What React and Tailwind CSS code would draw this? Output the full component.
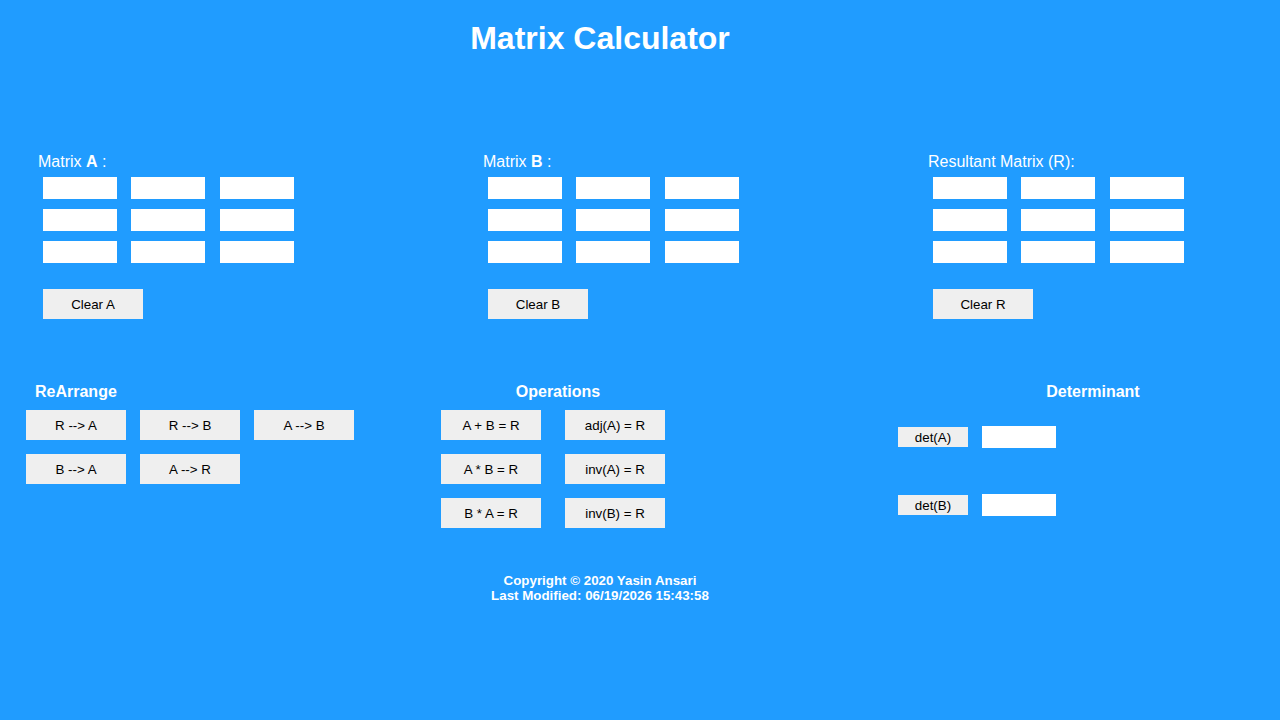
import React from "react";

const font = { fontFamily: '"Liberation Sans", Arial, sans-serif' };

function Cell() {
  return <input type="text" className="block w-[74px] h-[22px] bg-white border-0 outline-none p-0 shrink-0" />;
}

function Btn({ children, w = "w-[100px]", h = "h-[30px]" }) {
  return (
    <button className={`${w} ${h} shrink-0 bg-[#efefef] text-black text-[13.333px] leading-none flex items-center justify-center border-0 p-0 pt-px`}>
      {children}
    </button>
  );
}

function MatrixBlock({ label, clear, w = "w-[445px]" }) {
  return (
    <div className={`${w} shrink-0 flex flex-col`}>
      <div className="text-white text-[16px] leading-[18px] h-[18px] whitespace-nowrap">{label}</div>
      <div className="pl-[5px] mt-[6px] flex flex-col gap-[10px]">
        {[0, 1, 2].map((r) => (
          <div key={r} className="flex">
            <div className="mr-[14px]"><Cell /></div>
            <div className="mr-[15px]"><Cell /></div>
            <Cell />
          </div>
        ))}
      </div>
      <div className="pl-[5px] mt-[26px]">
        <Btn>{clear}</Btn>
      </div>
    </div>
  );
}

export default function App() {
  return (
    <div className="min-h-screen w-full bg-[#209cff] overflow-hidden" style={font}>
      <div className="w-[1200px] pt-[20px]">
        <h1 className="text-center text-white font-bold text-[32px] leading-[36px]">Matrix Calculator</h1>
      </div>

      <div className="flex pl-[38px] mt-[97px]">
        <MatrixBlock label={<>Matrix <b>A</b> :</>} clear="Clear A" />
        <MatrixBlock label={<>Matrix <b>B</b> :</>} clear="Clear B" />
        <MatrixBlock label={<>Resultant Matrix (R):</>} clear="Clear R" w="w-[300px]" />
      </div>

      <div className="flex mt-[64px]">
        <div className="pl-[26px] w-[441px] shrink-0 flex flex-col">
          <div className="pl-[9px] text-white font-bold text-[16px] leading-[18px]">ReArrange</div>
          <div className="mt-[9px] flex flex-col gap-[14px]">
            <div className="flex gap-[14px]">
              <Btn>R --&gt; A</Btn>
              <Btn>R --&gt; B</Btn>
              <Btn>A --&gt; B</Btn>
            </div>
            <div className="flex gap-[14px]">
              <Btn>B --&gt; A</Btn>
              <Btn>A --&gt; R</Btn>
            </div>
          </div>
        </div>

        <div className="w-[457px] shrink-0 flex flex-col">
          <div className="w-[234px] text-center text-white font-bold text-[16px] leading-[18px]">Operations</div>
          <div className="mt-[9px] flex flex-col gap-[14px]">
            <div className="flex gap-[24px]">
              <Btn>A + B = R</Btn>
              <Btn>adj(A) = R</Btn>
            </div>
            <div className="flex gap-[24px]">
              <Btn>A * B = R</Btn>
              <Btn>inv(A) = R</Btn>
            </div>
            <div className="flex gap-[24px]">
              <Btn>B * A = R</Btn>
              <Btn>inv(B) = R</Btn>
            </div>
          </div>
        </div>

        <div className="flex flex-col shrink-0">
          <div className="w-[390px] text-center text-white font-bold text-[16px] leading-[18px]">Determinant</div>
          <div className="mt-[25px] flex flex-col gap-[46px]">
            <div className="flex items-center gap-[14px] h-[22px]">
              <Btn w="w-[70px]" h="h-[20px]">det(A)</Btn>
              <Cell />
            </div>
            <div className="flex items-center gap-[14px] h-[22px]">
              <Btn w="w-[70px]" h="h-[20px]">det(B)</Btn>
              <Cell />
            </div>
          </div>
        </div>
      </div>

      <div className="w-[1200px] mt-[45px] text-center text-white font-bold text-[13.333px] leading-[15px]">
        <div>Copyright © 2020 Yasin Ansari</div>
        <div>Last Modified: 06/19/2026 15:43:58</div>
      </div>
    </div>
  );
}
